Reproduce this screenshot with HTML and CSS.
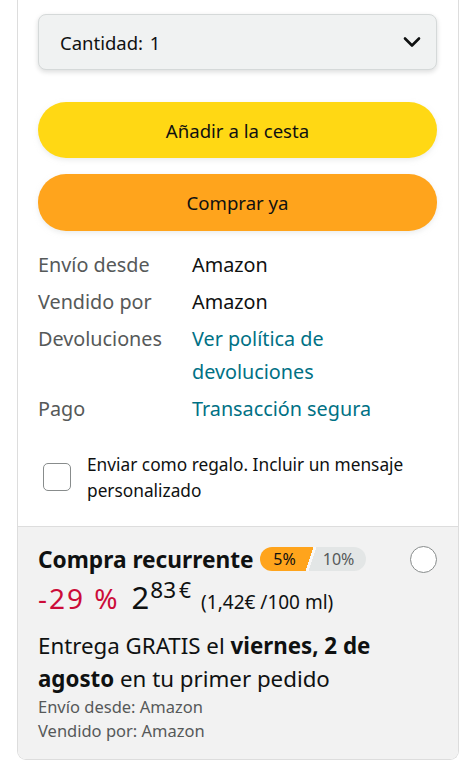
FILE: index.html
```html
<!DOCTYPE html>
<html lang="es">
<head>
<meta charset="utf-8">
<link rel="stylesheet" href="styles.css">
</head>
<body>
<div class="card">
  <div class="main">
    <div class="select">
      <span>Cantidad: 1</span>
      <svg class="chev" width="18" height="12" viewBox="0 0 18 12"><path d="M2 2.5 L9 9.5 L16 2.5" fill="none" stroke="#0F1111" stroke-width="2.6" stroke-linecap="round" stroke-linejoin="round"/></svg>
    </div>
    <button class="btn cart">Añadir a la cesta</button>
    <button class="btn buy">Comprar ya</button>
    <div class="info">
      <div class="row"><span class="lbl">Envío desde</span><span class="val">Amazon</span></div>
      <div class="row"><span class="lbl">Vendido por</span><span class="val">Amazon</span></div>
      <div class="row"><span class="lbl">Devoluciones</span><span class="val link">Ver política de devoluciones</span></div>
      <div class="row"><span class="lbl">Pago</span><span class="val link">Transacción segura</span></div>
    </div>
    <div class="gift">
      <span class="box"></span>
      <span class="gift-text">Enviar como regalo. Incluir un mensaje personalizado</span>
    </div>
  </div>
  <div class="sub">
    <div class="sub-head">
      <span class="sub-title">Compra recurrente</span>
      <span class="badge"><span class="b1">5%</span><span class="b2">10%</span></span>
      <span class="radio"></span>
    </div>
    <div class="price">
      <span class="disc">-29 %</span>
      <span class="amount"><span class="whole">2</span><span class="frac">83</span><span class="cur">€</span></span>
      <span class="unit">(1,42€ /100 ml)</span>
    </div>
    <p class="delivery">Entrega GRATIS el <strong>viernes, 2 de</strong> <strong>agosto</strong> en tu primer pedido</p>
    <p class="small">Envío desde: Amazon</p>
    <p class="small">Vendido por: Amazon</p>
  </div>
</div>
</body>
</html>
```
FILE: styles.css
```css
* { box-sizing: border-box; }
html, body { margin: 0; padding: 0; background: #fff; }
body {
  font-family: "Noto Sans", "Open Sans", sans-serif;
  color: #0F1111;
  width: 475px;
}
.card {
  margin-left: 17px;
  width: 442px;
  border: 1px solid #dddddd;
  border-top: none;
  border-radius: 0 0 9px 9px;
  overflow: hidden;
}
.main {
  padding: 14px 21px 22px 20px;
}
.select {
  height: 56px;
  background: #F0F2F2;
  border: 1px solid #D5D9D9;
  border-radius: 8px;
  box-shadow: 0 2px 5px rgba(15,17,17,0.15);
  display: flex;
  align-items: center;
  justify-content: space-between;
  padding: 0 15px 0 21px;
  font-size: 18.5px;
  word-spacing: 2px;
}
.chev { display: block; }
.btn {
  display: block;
  width: 100%;
  border: none;
  border-radius: 28px;
  font-family: inherit;
  font-size: 18.6px;
  color: #0F1111;
  box-shadow: 0 2px 5px rgba(213,217,217,0.5);
}
.cart { height: 56px; margin-top: 32px; background: #FFD814; }
.buy { height: 57px; margin-top: 16px; background: #FFA41C; }
.info {
  margin-top: 17px;
  display: flex;
  flex-direction: column;
  gap: 4px;
  font-size: 19.8px;
  line-height: 33px;
}
.row { display: flex; }
.lbl { width: 154px; flex: none; color: #565959; }
.val { color: #0F1111; width: 200px; }
.link { color: #007185; }
.gift {
  margin-top: 27px;
  display: flex;
  gap: 16px;
  font-size: 17.3px;
  line-height: 26px;
  padding-left: 5px;
}
.box {
  flex: none;
  width: 28px;
  height: 28px;
  margin-top: 11px;
  border: 1.5px solid #888C8C;
  border-radius: 5px;
  background: #fff;
}
.gift-text { flex: 1; }
.sub {
  background: #F2F2F2;
  border-top: 1px solid #dddddd;
  padding: 17px 21px 16px 20px;
}
.sub-head {
  display: flex;
  align-items: center;
  height: 30px;
}
.sub-title { font-weight: 700; font-size: 22.7px; }
.badge {
  display: flex;
  margin-left: 6px;
  height: 24px;
  border-radius: 12px;
  overflow: hidden;
  font-size: 16px;
  line-height: 24px;
  background: linear-gradient(108deg, #FFA41C 0 47%, #f8f8f8 47% 49.5%, #E3E6E6 49.5%);
}
.b1 { width: 52px; text-align: center; padding-right: 2px; }
.b2 { width: 54px; text-align: center; color: #565959; }
.radio {
  margin-left: auto;
  width: 27px;
  height: 27px;
  border-radius: 50%;
  border: 1.5px solid #888C8C;
  background: #fff;
}
.price {
  display: flex;
  align-items: baseline;
  margin-top: 5px;
  height: 36px;
}
.disc { color: #CC0C39; font-size: 28px; letter-spacing: 2px; margin-right: 12px; }
.amount { display: flex; align-items: flex-start; }
.whole { font-size: 31px; line-height: 36px; }
.frac { font-size: 22.5px; line-height: 22px; margin-left: 1px; }
.cur { font-size: 21px; line-height: 22px; margin-left: 3px; }
.unit { font-size: 19px; margin-left: 10px; }
.delivery {
  margin: 14px 0 0;
  font-size: 22.3px;
  line-height: 33px;
}
.delivery strong { font-weight: 700; }
.small {
  margin: 0;
  font-size: 16.5px;
  line-height: 24px;
  color: #565959;
}
```
